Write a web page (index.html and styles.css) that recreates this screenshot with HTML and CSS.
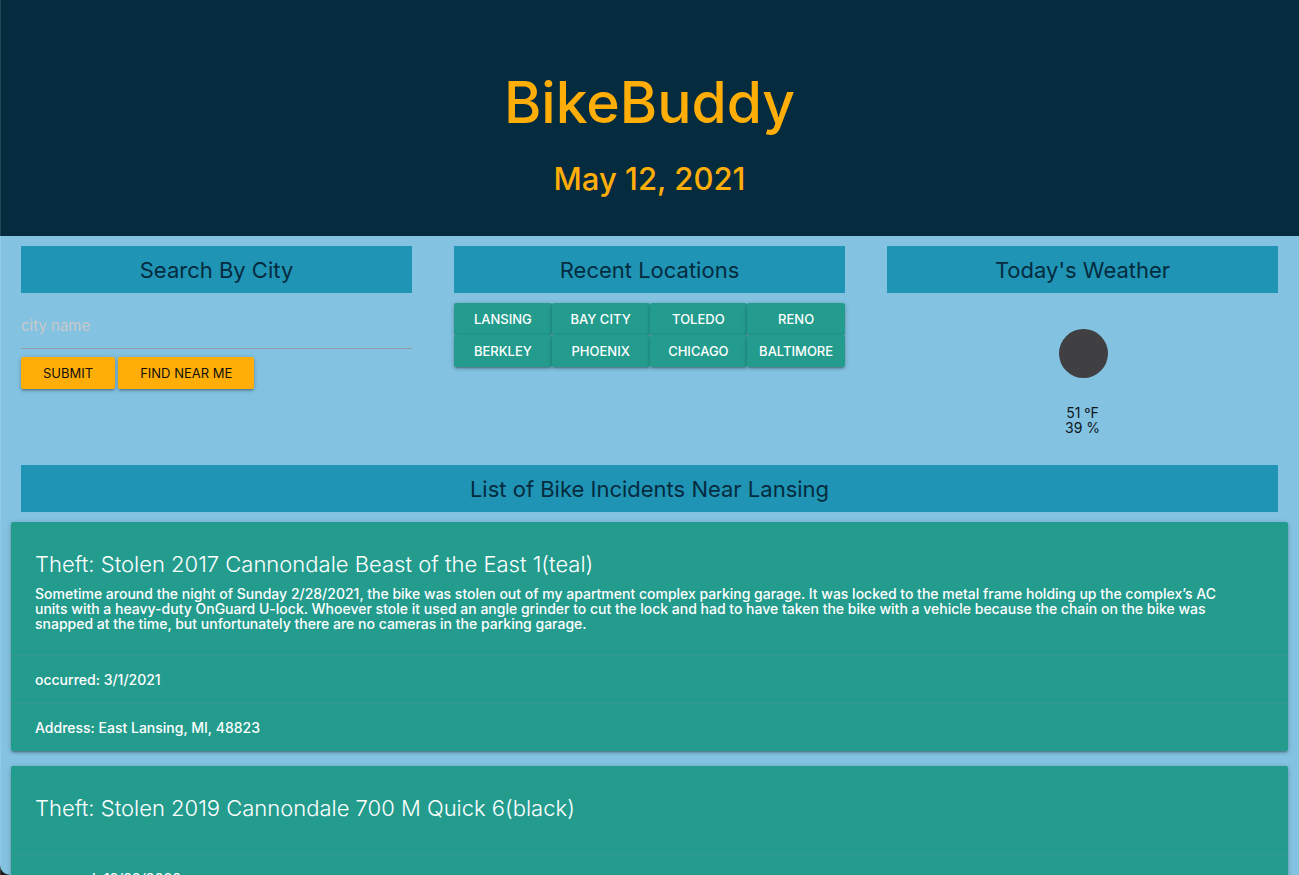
FILE: index.html
```html
<!DOCTYPE html>
<html lang="en">
<head>
<meta charset="utf-8">
<meta name="viewport" content="width=device-width, initial-scale=1">
<title>BikeBuddy</title>
<link rel="stylesheet" href="styles.css">
</head>
<body>
<div class="window">
  <header class="masthead">
    <h1 class="brand">BikeBuddy</h1>
    <h2 class="date">May 12, 2021</h2>
  </header>
  <main>
    <div class="panels">
      <section class="panel">
        <h3 class="heading">Search By City</h3>
        <form class="search">
          <input class="city-input" type="text" placeholder="city name" aria-label="city name">
          <div class="actions">
            <button class="btn btn-accent" type="submit">Submit</button>
            <button class="btn btn-accent" type="button">Find Near Me</button>
          </div>
        </form>
      </section>
      <section class="panel">
        <h3 class="heading">Recent Locations</h3>
        <div class="locations">
          <button class="btn btn-city" type="button">Lansing</button>
          <button class="btn btn-city" type="button">Bay City</button>
          <button class="btn btn-city" type="button">Toledo</button>
          <button class="btn btn-city" type="button">Reno</button>
          <button class="btn btn-city" type="button">Berkley</button>
          <button class="btn btn-city" type="button">Phoenix</button>
          <button class="btn btn-city" type="button">Chicago</button>
          <button class="btn btn-city" type="button">Baltimore</button>
        </div>
      </section>
      <section class="panel">
        <h3 class="heading">Today's Weather</h3>
        <div class="weather">
          <svg class="weather-icon" viewBox="0 0 100 100" role="img" aria-label="Clear night"><circle cx="50.5" cy="50.5" r="24.5" fill="#404042"/></svg>
          <div>51 ºF</div>
          <div>39 %</div>
        </div>
      </section>
    </div>
    <section class="incidents">
      <h3 class="heading list-heading">List of Bike Incidents Near Lansing</h3>
      <article class="card">
        <div class="card-content">
          <h4 class="card-title">Theft: Stolen 2017 Cannondale Beast of the East 1(teal)</h4>
          <p class="card-text">Sometime around the night of Sunday 2/28/2021, the bike was stolen out of my apartment complex parking garage. It was locked to the metal frame holding up the complex’s AC units with a heavy-duty OnGuard U-lock. Whoever stole it used an angle grinder to cut the lock and had to have taken the bike with a vehicle because the chain on the bike was snapped at the time, but unfortunately there are no cameras in the parking garage.</p>
        </div>
        <div class="card-row">occurred: 3/1/2021</div>
        <div class="card-row">Address: East Lansing, MI, 48823</div>
      </article>
      <article class="card">
        <div class="card-content">
          <h4 class="card-title">Theft: Stolen 2019 Cannondale 700 M Quick 6(black)</h4>
          <p class="card-text"></p>
        </div>
        <div class="card-row">occurred: 12/28/2020</div>
      </article>
    </section>
  </main>
</div>
</body>
</html>
```
FILE: styles.css
```css
* { box-sizing: border-box; }

html { background: #1c1c1c; }

body {
  margin: 0;
  font-family: Inter, "Liberation Sans", sans-serif;
  font-size: 14px;
  line-height: 15px;
  color: #10181d;
}

h1, h2, h3, h4, p { margin: 0; }

.window {
  position: relative;
  height: 100vh;
  overflow-y: auto;
  scrollbar-width: none;
  background: #83c2e1;
  border-bottom-left-radius: 10px;
}

.window::before {
  content: "";
  position: fixed;
  inset: 0 auto 0 0;
  width: 1px;
  background: rgba(255, 255, 255, 0.12);
}

.masthead {
  padding: 68px 20px 36px;
  background: #052b3e;
  color: #ffae08;
  text-align: center;
}

.brand {
  font-size: 57px;
  line-height: 70px;
  font-weight: 500;
}

.date {
  margin-top: 20px;
  font-size: 31px;
  line-height: 42px;
  font-weight: 500;
}

.panels {
  display: grid;
  grid-template-columns: repeat(3, 1fr);
}

.panel { padding: 10px 21px 20px; }

.heading {
  padding: 11px 10px 9px;
  background: #1f94b5;
  color: #052b3e;
  font-size: 22px;
  line-height: 27px;
  font-weight: 400;
  text-align: center;
}

.city-input {
  display: block;
  width: 100%;
  height: 46px;
  margin: 10px 0 8px;
  padding: 0;
  border: 0;
  border-bottom: 1px solid #949da6;
  background: transparent;
  color: #052b3e;
  font: inherit;
  font-size: 15px;
  outline: none;
}

.city-input::placeholder { color: #c9c9cb; opacity: 1; }

.actions { display: flex; gap: 3px; }

.btn {
  height: 32px;
  border: 0;
  border-radius: 2px;
  box-shadow: 0 2px 2px rgba(0, 0, 0, 0.14), 0 3px 1px -2px rgba(0, 0, 0, 0.12), 0 1px 5px rgba(0, 0, 0, 0.2);
  font: inherit;
  font-size: 13px;
  text-transform: uppercase;
  cursor: pointer;
}

.btn-accent {
  padding: 0 22px;
  background: #ffae08;
  color: #10100c;
}

.btn-city {
  padding: 0;
  background: #239c8e;
  color: #fff;
  font-weight: 500;
}

.locations {
  display: grid;
  grid-template-columns: repeat(4, 1fr);
  margin-top: 10px;
}

.weather {
  display: flex;
  flex-direction: column;
  align-items: center;
  margin-top: 10px;
  line-height: 15px;
}

.weather-icon {
  width: 100px;
  height: 100px;
  margin-bottom: 2px;
}

.incidents { padding: 10px 11px; }

.list-heading { margin: 0 10px 10px; }

.card {
  margin-bottom: 15px;
  border-radius: 2px;
  background: #239c8e;
  color: #fff;
  font-weight: 500;
  box-shadow: 0 2px 2px rgba(0, 0, 0, 0.14), 0 3px 1px -2px rgba(0, 0, 0, 0.12), 0 1px 5px rgba(0, 0, 0, 0.2);
}

.card-content { padding: 24px; }

.card-title {
  padding-top: 2px;
  margin-bottom: 6px;
  font-size: 22px;
  line-height: 32px;
  font-weight: 300;
}

.card-text { padding-right: 24px; }

.card-row {
  padding: 16px 24px;
  border-top: 1px solid #36998f;
}
```
